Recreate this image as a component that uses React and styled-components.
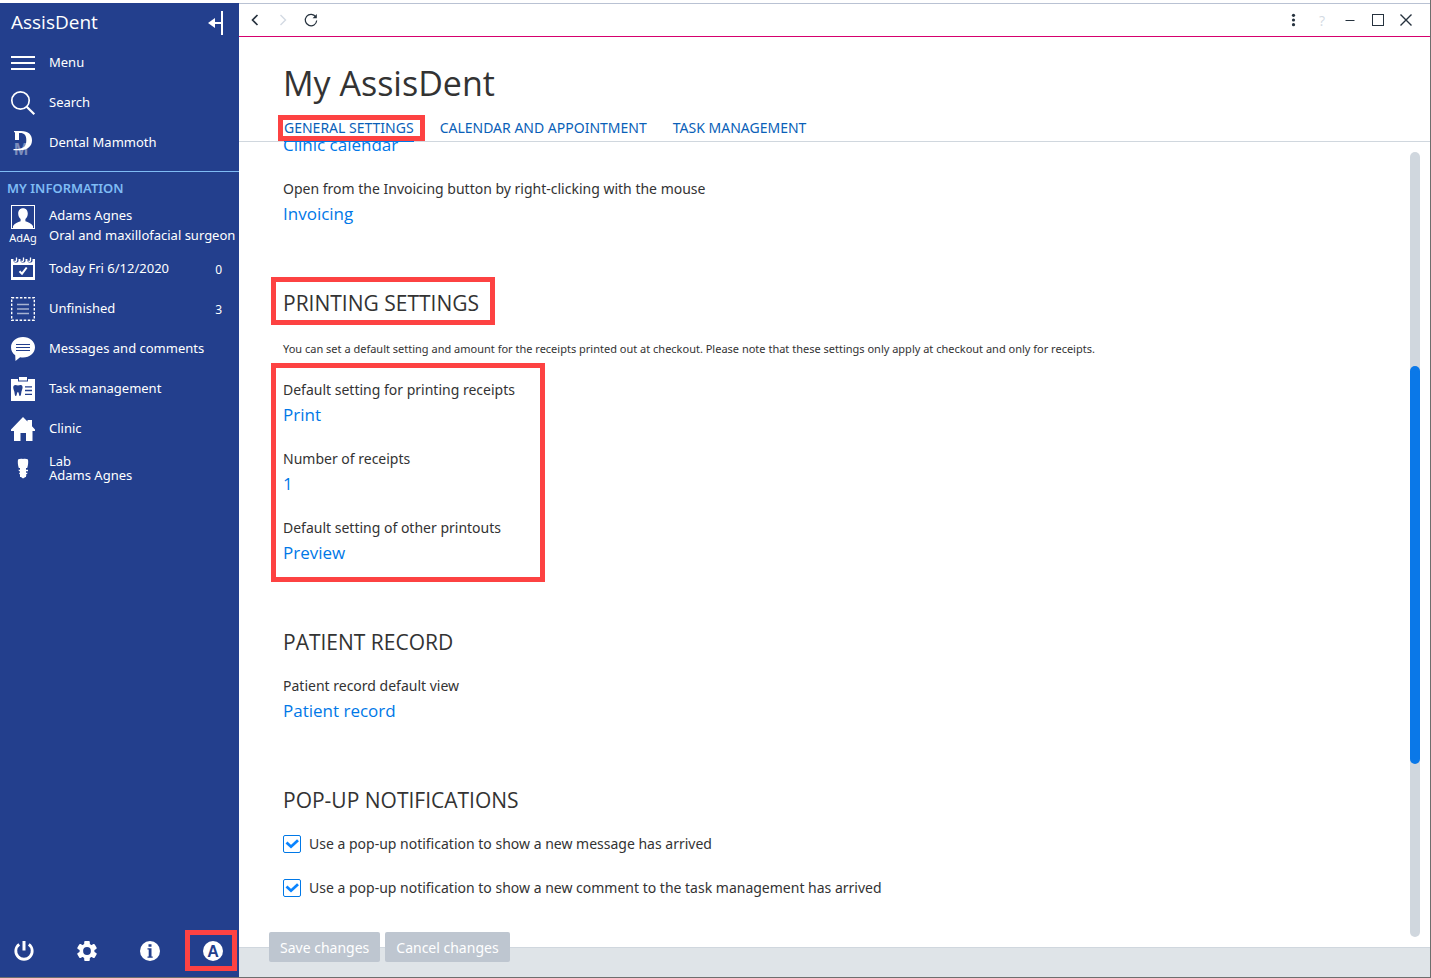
import React from "react";
import styled, { createGlobalStyle } from "styled-components";

const color = {
  navy: "#233f8d",
  sky: "#7fbcf5",
  red: "#fd4242",
  pink: "#d6006e",
  link: "#0078e7",
  tab: "#0a5fb8",
  ink: "#333333",
  dark: "#26323e",
  faint: "#d3dae3",
  line: "#d0d7de",
};

const textFont = `"Noto Sans", "Open Sans", sans-serif`;

const Global = createGlobalStyle`
  * { box-sizing: border-box; }
  body {
    margin: 0;
    font-family: "Open Sans", "Noto Sans", sans-serif;
    color: ${color.ink};
    background: #fff;
  }
  button { font: inherit; border: 0; background: none; padding: 0; cursor: pointer; }
  a { text-decoration: none; color: inherit; }
  h1, h2, p { margin: 0; font-weight: 400; }
  svg { overflow: visible; }
`;

const Window = styled.div`
  display: flex;
  height: 100vh;
  padding-top: 3px;
  border-right: 1px solid #6e6e6e;
  border-bottom: 1px solid #6e6e6e;
`;

/* ---- sidebar ---- */

const Sidebar = styled.aside`
  display: flex;
  flex-direction: column;
  flex: none;
  width: 239px;
  background: ${color.navy};
  color: #fff;
  font-family: ${textFont};
  font-size: 13px;
  white-space: nowrap;
`;

const Brand = styled.div`
  display: flex;
  align-items: center;
  justify-content: space-between;
  height: 39px;
  padding: 0 16px 1px 11px;
  font-family: "Open Sans", sans-serif;
  font-size: 19px;
`;

const IconButton = styled.button`
  display: flex;
  align-items: center;
  justify-content: center;
  color: inherit;
`;

const NavList = styled.nav`
  display: flex;
  flex-direction: column;
`;

const NavItem = styled.a`
  display: flex;
  align-items: ${(p) => (p.$tall ? "flex-start" : "center")};
  gap: 14px;
  height: ${(p) => (p.$tall ? 43 : 40)}px;
  padding: ${(p) => (p.$tall ? 0 : 2)}px 17px 0 11px;
  svg { flex: none; }
`;

const NavText = styled.span`
  display: flex;
  flex-direction: column;
  flex: 1;
  padding-bottom: 2px;
  line-height: ${(p) => (p.$tight ? 14 : 20)}px;
`;

const Count = styled.span`
  font-size: 12px;
`;

const SectionTitle = styled.h2`
  margin-top: 9px;
  padding-left: 7px;
  border-top: 1px solid ${color.sky};
  color: ${color.sky};
  font-size: 13px;
  font-weight: 600;
  line-height: 33px;
`;

const Avatar = styled.span`
  display: flex;
  flex-direction: column;
  align-items: center;
  width: 24px;
  font-size: 11px;
  line-height: 18px;
`;

const Tools = styled.div`
  display: flex;
  align-items: center;
  justify-content: space-between;
  height: 52px;
  margin-top: auto;
  padding: 0 16px 0 14px;
`;

/* ---- highlight frame drawn over a part of the page ---- */

const Marked = styled.div`
  position: relative;
  width: fit-content;
  &::after {
    content: "";
    position: absolute;
    inset: ${(p) => p.$inset};
    border: 5px solid ${color.red};
    pointer-events: none;
  }
`;

/* ---- main area ---- */

const Main = styled.main`
  display: flex;
  flex-direction: column;
  flex: 1;
  min-width: 0;
`;

const TopBar = styled.div`
  display: flex;
  align-items: center;
  justify-content: space-between;
  height: 34px;
  padding: 0 10px 0 2px;
  border-top: 1px solid #b9c2d3;
  border-bottom: 1px solid ${color.pink};
  color: ${color.dark};
`;

const BarGroup = styled.div`
  display: flex;
`;

const BarButton = styled(IconButton)`
  width: 28px;
  height: 28px;
  font-size: 14px;
  color: ${(p) => (p.disabled ? color.faint : color.dark)};
`;

const Header = styled.header`
  position: relative;
  z-index: 1;
  padding: 22px 44px 0;
  border-bottom: 1px solid ${color.line};
`;

const Title = styled.h1`
  font-size: 34px;
  line-height: 48px;
`;

const Tabs = styled.nav`
  display: flex;
  gap: 26px;
  padding: 11px 0 0 1px;
  color: ${color.tab};
  font-family: ${textFont};
  font-size: 14px;
  line-height: 20px;
`;

const Tab = styled.a`
  display: block;
  margin-bottom: -1px;
  padding-bottom: 3px;
  border-bottom: 1px solid ${(p) => (p.$active ? color.link : "transparent")};
`;

const Body = styled.div`
  display: flex;
  flex: 1;
  min-height: 0;
`;

const Scroller = styled.div`
  flex: 1;
  overflow: hidden;
  padding: 0 44px;
`;

const Content = styled.div`
  margin-top: -10px;
`;

const Track = styled.div`
  flex: none;
  width: 10px;
  margin: 10px;
  border-radius: 5px;
  background: ${color.line};
`;

const Thumb = styled.div`
  position: relative;
  top: 27.3%;
  height: 50.7%;
  border-radius: 5px;
  background: #0a78e8;
`;

const Section = styled.section`
  margin-top: 60px;
`;

const Heading = styled.h2`
  margin-bottom: 16px;
  font-size: 21px;
  line-height: 32px;
`;

const Note = styled.p`
  margin-bottom: 15px;
  font-family: ${textFont};
  font-size: 11px;
  line-height: 28px;
`;

const Fields = styled.div`
  display: flex;
  flex-direction: column;
  gap: 19px;
`;

const Label = styled.div`
  font-family: ${textFont};
  font-size: 14px;
  line-height: 24px;
`;

const Value = styled.a`
  display: block;
  width: fit-content;
  color: ${color.link};
  font-size: 17px;
  line-height: 26px;
`;

const Checks = styled.div`
  display: flex;
  flex-direction: column;
  gap: 20px;
`;

const CheckLabel = styled.label`
  display: flex;
  align-items: center;
  gap: 8px;
  font-family: ${textFont};
  font-size: 14px;
  line-height: 24px;
`;

const Tick = styled.span`
  position: relative;
  display: flex;
  svg { position: absolute; inset: 0; pointer-events: none; }
  input:not(:checked) + svg { display: none; }
`;

const TickInput = styled.input`
  appearance: none;
  width: 18px;
  height: 18px;
  margin: 0;
  border: 1px solid ${color.link};
  border-radius: 2px;
  background: #fff;
`;

const Footer = styled.footer`
  display: flex;
  flex: none;
  gap: 5px;
  height: 30px;
  padding-left: 30px;
  border-top: 1px solid ${color.line};
  background: #dfe4e8;
`;

const ActionButton = styled.button`
  height: 30px;
  margin-top: -16px;
  && {
    padding: 0 11px;
    border-radius: 2px;
    background: #bec6d0;
    color: #fff;
    font-family: ${textFont};
    font-size: 14px;
  }
`;

/* ---- icons ---- */

const Svg = ({ size = 24, w, h, children, ...rest }) => (
  <svg
    width={w || size}
    height={h || size}
    viewBox={`0 0 ${w || size} ${h || size}`}
    fill="none"
    aria-hidden="true"
    {...rest}
  >
    {children}
  </svg>
);

const CollapseIcon = () => (
  <Svg w={16} h={24}>
    <path d="M15 1v24" stroke="#fff" strokeWidth="2" />
    <path d="M6 13h9" stroke="#fff" strokeWidth="2" />
    <path d="M1 13l7-5v10z" fill="#fff" />
  </Svg>
);

const MenuIcon = () => (
  <Svg>
    <path d="M0 6h24M0 12h24M0 18h24" stroke="#fff" strokeWidth="2" />
  </Svg>
);

const SearchIcon = () => (
  <Svg>
    <circle cx="9.5" cy="9.5" r="8.700" stroke="#fff" strokeWidth="1.700" />
    <path d="M15.700 15.700L23.300 23.300" stroke="#fff" strokeWidth="2.200" />
  </Svg>
);

const MammothIcon = () => (
  <Svg>
    <text x="3" y="23.500" fontFamily="Liberation Sans" fontWeight="700" fontSize="17" fill="#7c8cbb">M</text>
    <path d="M3 0H10c7.500 0 11 3.800 11 9.300S17 19.300 9 19.300H2.500v-1.300H6c7-.3 9.300-3 9.300-8.700 0-5-2-7.300-6-7.300H8V9H4V1.500L3 1z" fill="#fff" />
  </Svg>
);

const PersonIcon = () => (
  <Svg>
    <rect x=".5" y=".5" width="23" height="23" stroke="#fff" />
    <path d="M12 3.200c3 0 4.800 2.200 4.800 5.300 0 2.400-1 4.300-2.400 5.500v2.200c2.800 1 5.900 2.200 7.600 4.800V23.500H2V21c1.700-2.600 4.800-3.800 7.600-4.800V14C8.200 12.800 7.200 10.900 7.200 8.500c0-3.100 1.800-5.300 4.800-5.300z" fill="#fff" />
  </Svg>
);

const CalendarIcon = () => (
  <Svg>
    <path d="M0 2h24V23H0z" fill="#fff" />
    <path d="M2 8h20V20H2z" fill={color.navy} />
    <path d="M8.500 14.200l2.500 2.500 4.700-6.200" stroke="#fff" strokeWidth="2" />
    <g fill={color.navy}>
      <circle cx="5" cy="3" r="2.600" />
      <circle cx="12" cy="3" r="2.600" />
      <circle cx="19" cy="3" r="2.600" />
    </g>
    <path d="M5.500 .5v3c0 1-1.500 1.200-2 .3M12.500 .5v3c0 1-1.500 1.200-2 .3M19.500 .5v3c0 1-1.500 1.200-2 .3" stroke="#fff" strokeWidth="1.300" />
  </Svg>
);

const UnfinishedIcon = () => (
  <Svg>
    <rect x=".7" y=".7" width="22.600" height="22.600" stroke="#fff" strokeWidth="1.400" strokeDasharray="2.500 1.600" />
    <path d="M6 7.500h12M6 12h12M6 16.500h12" stroke="#a7b3d1" strokeWidth="1.500" />
  </Svg>
);

const MessageIcon = () => (
  <Svg>
    <path d="M12 0c6.800 0 12 4.400 12 10.200S18.800 20.400 12 20.400c-1 0-2 0-2.900-.2L4.500 24l-.3-5.800C1.600 16.300 0 13.500 0 10.200 0 4.400 5.200 0 12 0z" fill="#fff" />
    <path d="M5 7.500h14M5 10.500h14M5 13.500h14" stroke={color.navy} strokeWidth="1" />
  </Svg>
);

const TaskIcon = () => (
  <Svg>
    <path d="M0 2h24v22H0z" fill="#fff" />
    <path d="M7 2h10v2.500H7z" fill={color.navy} />
    <path d="M8 0h8v3.500H8z" fill="#fff" />
    <path d="M2.500 9c1-1.500 3-1 4.500-.4C8.500 8 10.500 7.500 11.300 9c.8 1.800-.3 3.800-.8 5.500-.4 1.700-.4 4.500-1.600 4.500-1.100 0-.8-4-2-4s-.9 4-2 4c-1.200 0-1.200-2.800-1.600-4.500C2.800 12.800 1.700 10.800 2.500 9z" fill={color.navy} />
    <path d="M14 9.800h7M14 13.500h7M14 17.300h7" stroke={color.navy} strokeWidth="1.300" />
  </Svg>
);

const HomeIcon = () => (
  <Svg>
    <path d="M12 0l4.500 4.600V3H21v6.200l3 3.300V14h-2.500v10H15v-8H9.500v8H3V14H0v-1.500z" fill="#fff" />
  </Svg>
);

const ImplantIcon = () => (
  <Svg>
    <path d="M7 2.500c1-.7 2.800-.9 5-.6 2.200-.3 4-.1 5 .6.400 2.500.2 5.500-.8 8.500H7.800C6.800 8 6.600 5 7 2.500z" fill="#fff" />
    <path d="M9 11h6v9H9zM7.500 12.800h9.500v1.500H8zM8 15.800h8.500l-.5 1.500H8.500zM9 18.300h6.500l-1 1.700-2.500 1.500L10 20z" fill="#fff" />
  </Svg>
);

const PowerIcon = () => (
  <Svg size={20}>
    <path d="M5.200 3.400a8.200 8.200 0 1 0 9.600 0" stroke="#fff" strokeWidth="2.800" />
    <path d="M10 0v9.500" stroke="#fff" strokeWidth="3" />
  </Svg>
);

const GearIcon = () => (
  <Svg size={20}>
    <g fill="#fff">
      <circle cx="10" cy="10" r="7.500" />
      {[0, 60, 120, 180, 240, 300].map((a) => (
        <rect key={a} x="7.200" y="0" width="5.600" height="5" rx="1" transform={`rotate(${a} 10 10)`} />
      ))}
    </g>
    <circle cx="10" cy="10" r="3.900" fill={color.navy} />
  </Svg>
);

const InfoIcon = () => (
  <Svg size={20}>
    <circle cx="10" cy="10" r="10" fill="#fff" />
    <path d="M8.500 3.200h3v2.600h-3zM7.500 7.300h4v8.200h1.200v1.300H7.500v-1.300h1.200V8.600H7.500z" fill={color.navy} />
  </Svg>
);

const AccountIcon = () => (
  <Svg size={20}>
    <circle cx="10" cy="10" r="10" fill="#fff" />
    <text x="10" y="15.500" textAnchor="middle" fontFamily="Liberation Sans" fontWeight="700" fontSize="16" fill={color.navy}>A</text>
  </Svg>
);

const strokeDark = { stroke: "currentColor" };

function CheckRow({ id, children }) {
  return (
    <CheckLabel htmlFor={id}>
      <Tick>
        <TickInput type="checkbox" id={id} defaultChecked />
        <Svg size={18}>
          <path d="M3.500 7.500l4.500 4.200 7-6.500" stroke="#0a84ff" strokeWidth="2.800" />
        </Svg>
      </Tick>
      {children}
    </CheckLabel>
  );
}

function Field({ label, value }) {
  return (
    <div>
      {label && <Label>{label}</Label>}
      <Value href="#">{value}</Value>
    </div>
  );
}

function Item({ icon, children, count, tall, tight }) {
  return (
    <NavItem href="#" $tall={tall}>
      {icon}
      <NavText $tight={tight}>{children}</NavText>
      {count !== undefined && <Count>{count}</Count>}
    </NavItem>
  );
}

export default function App() {
  return (
    <>
      <Global />
      <Window>
        <Sidebar>
          <Brand>
            AssisDent
            <IconButton aria-label="Collapse sidebar"><CollapseIcon /></IconButton>
          </Brand>
          <NavList>
            <Item icon={<MenuIcon />}>Menu</Item>
            <Item icon={<SearchIcon />}>Search</Item>
            <Item icon={<MammothIcon />}>Dental Mammoth</Item>
          </NavList>
          <SectionTitle>MY INFORMATION</SectionTitle>
          <NavList>
            <Item tall icon={<Avatar><PersonIcon />AdAg</Avatar>}>
              <span>Adams Agnes</span>
              <span>Oral and maxillofacial surgeon</span>
            </Item>
            <Item icon={<CalendarIcon />} count={0}>Today Fri 6/12/2020</Item>
            <Item icon={<UnfinishedIcon />} count={3}>Unfinished</Item>
            <Item icon={<MessageIcon />}>Messages and comments</Item>
            <Item icon={<TaskIcon />}>Task management</Item>
            <Item icon={<HomeIcon />}>Clinic</Item>
            <Item tight icon={<ImplantIcon />}>
              <span>Lab</span>
              <span>Adams Agnes</span>
            </Item>
          </NavList>
          <Tools>
            <IconButton aria-label="Log out"><PowerIcon /></IconButton>
            <IconButton aria-label="Settings"><GearIcon /></IconButton>
            <IconButton aria-label="Information"><InfoIcon /></IconButton>
            <Marked $inset="-11px -14px -10px -18px">
              <IconButton aria-label="My AssisDent"><AccountIcon /></IconButton>
            </Marked>
          </Tools>
        </Sidebar>

        <Main>
          <TopBar>
            <BarGroup>
              <BarButton aria-label="Back">
                <Svg size={12}><path d="M8.500 1L3.500 6l5 5" {...strokeDark} strokeWidth="1.600" /></Svg>
              </BarButton>
              <BarButton aria-label="Forward" disabled>
                <Svg size={12}><path d="M3.500 1l5 5-5 5" {...strokeDark} strokeWidth="1.400" /></Svg>
              </BarButton>
              <BarButton aria-label="Reload">
                <Svg size={14}>
                  <path d="M11.800 4A5.700 5.700 0 1 0 12.700 7.500" {...strokeDark} strokeWidth="1.200" />
                  <path d="M12.800 1v4.200H8.600z" fill="currentColor" />
                </Svg>
              </BarButton>
            </BarGroup>
            <BarGroup>
              <BarButton aria-label="More">
                <Svg size={14}>
                  <g fill="currentColor">
                    <circle cx="6.500" cy="2.300" r="1.600" /><circle cx="6.500" cy="7" r="1.600" /><circle cx="6.500" cy="11.700" r="1.600" />
                  </g>
                </Svg>
              </BarButton>
              <BarButton aria-label="Help" disabled>?</BarButton>
              <BarButton aria-label="Minimize">
                <Svg size={14}><path d="M2.500 7.500h9" {...strokeDark} /></Svg>
              </BarButton>
              <BarButton aria-label="Maximize">
                <Svg size={14}><rect x="1.500" y="1.500" width="11" height="11" {...strokeDark} /></Svg>
              </BarButton>
              <BarButton aria-label="Close">
                <Svg size={14}><path d="M1.500 1.500l11 11M12.500 1.500l-11 11" {...strokeDark} strokeWidth="1.400" /></Svg>
              </BarButton>
            </BarGroup>
          </TopBar>

          <Header>
            <Title>My AssisDent</Title>
            <Tabs>
              <Marked $inset="-3px -11px 0 -6px">
                <Tab href="#" $active>GENERAL SETTINGS</Tab>
              </Marked>
              <Tab href="#">CALENDAR AND APPOINTMENT</Tab>
              <Tab href="#">TASK MANAGEMENT</Tab>
            </Tabs>
          </Header>

          <Body>
            <Scroller>
              <Content>
                <Fields>
                  <Field value="Clinic calendar" />
                  <Field label="Open from the Invoicing button by right-clicking with the mouse" value="Invoicing" />
                </Fields>

                <Section>
                  <Marked $inset="-10px -16px -6px -12px">
                    <Heading>PRINTING SETTINGS</Heading>
                  </Marked>
                  <Note>
                    You can set a default setting and amount for the receipts printed out at checkout. Please note
                    that these settings only apply at checkout and only for receipts.
                  </Note>
                  <Marked $inset="-15px -30px -16px -12px">
                    <Fields>
                      <Field label="Default setting for printing receipts" value="Print" />
                      <Field label="Number of receipts" value="1" />
                      <Field label="Default setting of other printouts" value="Preview" />
                    </Fields>
                  </Marked>
                </Section>

                <Section>
                  <Heading>PATIENT RECORD</Heading>
                  <Field label="Patient record default view" value="Patient record" />
                </Section>

                <Section>
                  <Heading>POP-UP NOTIFICATIONS</Heading>
                  <Checks>
                    <CheckRow id="popup-message">
                      Use a pop-up notification to show a new message has arrived
                    </CheckRow>
                    <CheckRow id="popup-comment">
                      Use a pop-up notification to show a new comment to the task management has arrived
                    </CheckRow>
                  </Checks>
                </Section>
              </Content>
            </Scroller>
            <Track><Thumb /></Track>
          </Body>

          <Footer>
            <ActionButton type="button">Save changes</ActionButton>
            <ActionButton type="button">Cancel changes</ActionButton>
          </Footer>
        </Main>
      </Window>
    </>
  );
}
